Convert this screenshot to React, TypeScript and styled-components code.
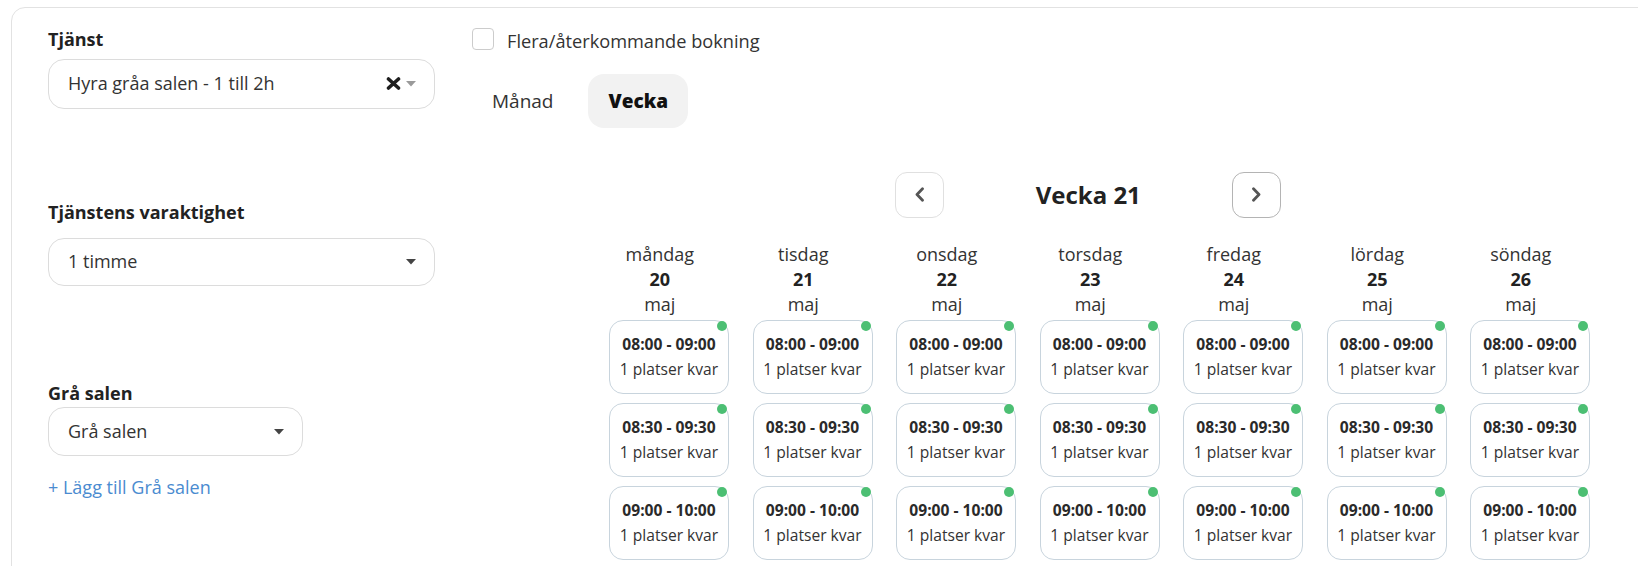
import React from "react";
import styled, { createGlobalStyle } from "styled-components";

const GlobalStyle = createGlobalStyle`
  html, body { margin: 0; padding: 0; background: #ffffff; overflow: hidden; }
  body {
    font-family: "Open Sans", "Noto Sans", sans-serif;
    color: #333333;
    font-size: 18px;
    line-height: 25px;
  }
  * { box-sizing: border-box; }
`;

const Page = styled.div`
  width: 1638px;
  height: 566px;
  overflow: hidden;
  padding: 7px 0 0 11px;
`;

const Card = styled.div`
  width: 1720px;
  min-height: 640px;
  border: 1px solid #e2e2e2;
  border-radius: 14px;
  display: flex;
  padding: 18.5px 0 0 36px;
`;

const LeftCol = styled.div`
  width: 387px;
  flex-shrink: 0;
  display: flex;
  flex-direction: column;
  align-items: flex-start;
`;

const Label = styled.div<{ $mt?: number }>`
  font-weight: 700;
  color: #222222;
  line-height: 25px;
  margin-top: ${(p) => p.$mt ?? 0}px;
`;

const SelectBox = styled.div<{ $w: number; $h: number; $mt: number }>`
  width: ${(p) => p.$w}px;
  height: ${(p) => p.$h}px;
  margin-top: ${(p) => p.$mt}px;
  border: 1px solid #dcdcdc;
  border-radius: 16px;
  background: #fff;
  display: flex;
  align-items: center;
  justify-content: space-between;
  padding: 0 18px 0 19px;
  color: #333333;
`;

const SelectIcons = styled.div`
  display: flex;
  align-items: center;
  gap: 5px;
`;

const AddLink = styled.a`
  margin-top: 19.3px;
  color: #4a8bd0;
  text-decoration: none;
  line-height: 25px;
  cursor: pointer;
`;

const RightCol = styled.div`
  margin-left: 37px;
  display: flex;
  flex-direction: column;
  align-items: flex-start;
`;

const CheckRow = styled.label`
  display: flex;
  align-items: flex-start;
  gap: 13px;
  margin-top: 1.5px;
`;

const CheckBox = styled.span`
  width: 22px;
  height: 22px;
  border: 1px solid #cccccc;
  border-radius: 4px;
  background: #fff;
  flex-shrink: 0;
`;

const CheckText = styled.span`
  margin-top: 1px;
  color: #333333;
  font-size: 18.2px;
`;

const Tabs = styled.div`
  display: flex;
  gap: 15px;
  margin-top: 20px;
`;

const Tab = styled.div<{ $active?: boolean }>`
  padding: 14.5px 20px;
  border-radius: 16px;
  background: ${(p) => (p.$active ? "#f2f2f2" : "transparent")};
  font-size: 19px;
  font-weight: ${(p) => (p.$active ? 800 : 400)};
  color: ${(p) => (p.$active ? "#111111" : "#333333")};
  line-height: 25px;
`;

const Calendar = styled.div`
  margin-left: 116px;
  margin-top: 43.6px;
  width: 1004.5px;
`;

const Nav = styled.div`
  display: flex;
  justify-content: center;
  align-items: center;
  padding-right: 4px;
`;

const NavButton = styled.div<{ $strong?: boolean }>`
  width: 49px;
  height: 46px;
  border: 1px solid ${(p) => (p.$strong ? "#b4b4b4" : "#e0e0e0")};
  border-radius: 12px;
  background: #fff;
  display: flex;
  align-items: center;
  justify-content: center;
`;

const Title = styled.div`
  width: 288px;
  text-align: center;
  font-size: 24px;
  font-weight: 700;
  line-height: 46px;
  color: #222222;
`;

const Grid = styled.div`
  display: grid;
  grid-template-columns: repeat(7, 143.5px);
  margin-top: 24px;
`;

const DayColumn = styled.div`
  display: flex;
  flex-direction: column;
`;

const DayHead = styled.div`
  text-align: center;
  line-height: 25px;
  color: #333333;
`;

const DayNum = styled.div`
  font-weight: 700;
  color: #222222;
`;

const Slots = styled.div`
  display: flex;
  flex-direction: column;
  gap: 9px;
  padding-left: 21px;
  margin-top: 3.5px;
`;

const Slot = styled.div`
  position: relative;
  width: 120px;
  height: 74px;
  border: 1px solid #c8d4dd;
  border-radius: 14px;
  padding: 11px 0;
  text-align: center;
  font-size: 15.6px;
  line-height: 25px;
  color: #333333;
  background: #fff;
`;

const SlotTime = styled.div`
  font-weight: 700;
  color: #2a2a2a;
`;

const Dot = styled.span`
  position: absolute;
  top: 0;
  right: 1px;
  width: 10px;
  height: 10px;
  border-radius: 50%;
  background: #4cbf73;
`;

const Caret = ({ color }: { color: string }) => (
  <svg width="10" height="6" viewBox="0 0 10 6">
    <polygon points="0,0 10,0 5,5.5" fill={color} />
  </svg>
);

const ClearIcon = () => (
  <svg width="15" height="13" viewBox="0 0 15 13">
    <path
      d="M2.5 2 L12.5 11 M12.5 2 L2.5 11"
      stroke="#1e1e1e"
      strokeWidth="3.6"
      strokeLinecap="round"
      fill="none"
    />
  </svg>
);

const Chevron = ({ dir }: { dir: "left" | "right" }) => (
  <svg width="11" height="15" viewBox="0 0 11 15">
    <path
      d={dir === "left" ? "M8.5 1.8 L3 7.5 L8.5 13.2" : "M2.5 1.8 L8 7.5 L2.5 13.2"}
      stroke="#555555"
      strokeWidth="2.8"
      strokeLinecap="round"
      strokeLinejoin="round"
      fill="none"
    />
  </svg>
);

const days = [
  { name: "måndag", num: 20 },
  { name: "tisdag", num: 21 },
  { name: "onsdag", num: 22 },
  { name: "torsdag", num: 23 },
  { name: "fredag", num: 24 },
  { name: "lördag", num: 25 },
  { name: "söndag", num: 26 },
];

const times = ["08:00 - 09:00", "08:30 - 09:30", "09:00 - 10:00"];

export default function App() {
  return (
    <Page>
      <GlobalStyle />
      <Card>
        <LeftCol>
          <Label>Tjänst</Label>
          <SelectBox $w={387} $h={50} $mt={7}>
            <span>Hyra gråa salen - 1 till 2h</span>
            <SelectIcons>
              <ClearIcon />
              <Caret color="#9a9a9a" />
            </SelectIcons>
          </SelectBox>

          <Label $mt={91.3}>Tjänstens varaktighet</Label>
          <SelectBox $w={387} $h={48.5} $mt={12.9}>
            <span>1 timme</span>
            <Caret color="#444444" />
          </SelectBox>

          <Label $mt={95}>Grå salen</Label>
          <SelectBox $w={255} $h={49} $mt={1}>
            <span>Grå salen</span>
            <Caret color="#444444" />
          </SelectBox>

          <AddLink>+ Lägg till Grå salen</AddLink>
        </LeftCol>

        <RightCol>
          <CheckRow>
            <CheckBox />
            <CheckText>Flera/återkommande bokning</CheckText>
          </CheckRow>

          <Tabs>
            <Tab>Månad</Tab>
            <Tab $active>Vecka</Tab>
          </Tabs>

          <Calendar>
            <Nav>
              <NavButton>
                <Chevron dir="left" />
              </NavButton>
              <Title>Vecka 21</Title>
              <NavButton $strong>
                <Chevron dir="right" />
              </NavButton>
            </Nav>

            <Grid>
              {days.map((d) => (
                <DayColumn key={d.name}>
                  <DayHead>
                    <div>{d.name}</div>
                    <DayNum>{d.num}</DayNum>
                    <div>maj</div>
                  </DayHead>
                  <Slots>
                    {times.map((t) => (
                      <Slot key={t}>
                        <Dot />
                        <SlotTime>{t}</SlotTime>
                        <div>1 platser kvar</div>
                      </Slot>
                    ))}
                  </Slots>
                </DayColumn>
              ))}
            </Grid>
          </Calendar>
        </RightCol>
      </Card>
    </Page>
  );
}
